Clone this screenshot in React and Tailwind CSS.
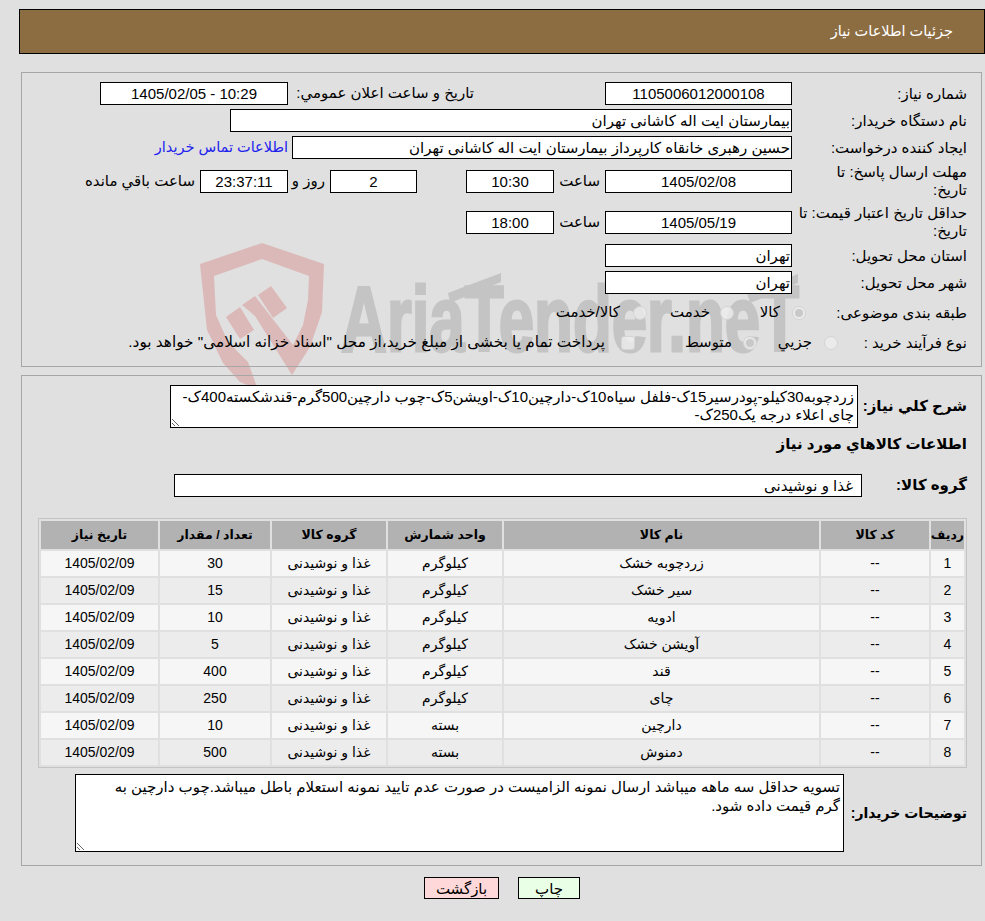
const items = [
  { id: 1, name: "زردچوبه خشک", unit: "کیلوگرم", qty: "30" },
  { id: 2, name: "سیر خشک", unit: "کیلوگرم", qty: "15" },
  { id: 3, name: "ادویه", unit: "کیلوگرم", qty: "10" },
  { id: 4, name: "آویشن خشک", unit: "کیلوگرم", qty: "5" },
  { id: 5, name: "قند", unit: "کیلوگرم", qty: "400" },
  { id: 6, name: "چای", unit: "کیلوگرم", qty: "250" },
  { id: 7, name: "دارچین", unit: "بسته", qty: "10" },
  { id: 8, name: "دمنوش", unit: "بسته", qty: "500" },
];

const font = { fontFamily: '"Liberation Sans", "DejaVu Sans", sans-serif' };

function Box({ className = "", children }) {
  return (
    <div className={`h-[23px] shrink-0 border border-black bg-white flex items-center justify-center text-[15px] leading-none whitespace-nowrap ${className}`}>
      {children}
    </div>
  );
}

function Label({ children }) {
  return <div className="w-[175px] shrink-0 text-[15px] leading-[18px]">{children}</div>;
}

function Radio({ checked, className = "" }) {
  return (
    <span className={`w-[14px] h-[14px] shrink-0 rounded-full border border-[#d4d4d4] bg-[#eeeeee]/80 flex items-center justify-center ${className}`}>
      {checked && <span className="w-[8px] h-[8px] rounded-full bg-[#c8c8c8]" />}
    </span>
  );
}

function Watermark() {
  return (
    <svg className="absolute left-0 top-0 pointer-events-none [direction:ltr]" width="985" height="420" viewBox="0 0 985 420">
      <path
        fill="#dcb9b9"
        d="M200 264 L262 243 L324 264 L322 312 L310 347 L292 375 L255 316 L242 305 L255 296 L272 318 L293 345 L303 325 L308 300 L309 276 L262 259 L214 276 L216 315 L228 342 L248 362 L258 390 L240 382 L223 363 L207 330 Z"
      />
      <path fill="#dcb9b9" d="M226 317 L240 307 L254 330 L240 339 Z" />
      <path fill="#dcb9b9" d="M258 295 L271 286 L287 308 L273 318 Z" />
      <text
        x="341"
        y="351"
        fill="#c4c4c4"
        stroke="#c4c4c4"
        strokeWidth="3"
        fontSize="93"
        fontWeight="700"
        textLength="458"
        lengthAdjust="spacingAndGlyphs"
        style={{ fontFamily: '"Liberation Sans", sans-serif' }}
      >
        AriaTender.neT
      </text>
      <path fill="#c4c4c4" d="M448 293 L501 273 L501 282 L450 303 Z" />
      <path fill="#c4c4c4" d="M747 293 L798 274 L798 283 L750 303 Z" />
    </svg>
  );
}

export default function App() {
  return (
    <div dir="rtl" style={font} className="relative w-[985px] h-[921px] overflow-hidden bg-[#e0e0e0] text-black">
      <Watermark />
      <div className="relative pt-[9px]">
        <div className="mr-0 ml-[19px] h-[45px] border border-black bg-[#8c6d42] flex items-center pr-[31px] pt-[1px] text-white text-[14.5px]">
          جزئیات اطلاعات نیاز
        </div>

        {/* first panel */}
        <div className="ml-[21px] mr-[3px] mt-[18px] h-[295px] border border-[#a6a6a6] pt-[9px] pr-[14px]">
          <div className="flex items-center h-[23px]">
            <Label>شماره نیاز:</Label>
            <Box className="w-[187px]">1105006012000108</Box>
            <div className="w-[186px] mr-[131px] text-[15px] whitespace-nowrap">تاریخ و ساعت اعلان عمومي:</div>
            <Box className="w-[188px]">10:29 - 1405/02/05</Box>
          </div>
          <div className="flex items-center h-[23px] mt-[4px]">
            <Label>نام دستگاه خریدار:</Label>
            <Box className="w-[562px] justify-start pr-[1px]">بیمارستان ایت اله کاشانی تهران</Box>
          </div>
          <div className="flex items-center h-[23px] mt-[4px]">
            <Label>ایجاد کننده درخواست:</Label>
            <Box className="w-[500px] justify-start pr-[1px]">حسین رهبری خانقاه کارپرداز بیمارستان ایت اله کاشانی تهران</Box>
            <a className="mr-[4px] text-[14.5px] text-[#2222ee]">اطلاعات تماس خریدار</a>
          </div>
          <div className="flex items-center h-[36px] mt-[4px]">
            <Label>مهلت ارسال پاسخ: تا<br />تاریخ:</Label>
            <Box className="w-[187px]">1405/02/08</Box>
            <div className="w-[51px] pr-[5px] text-[15px]">ساعت</div>
            <Box className="w-[88px]">10:30</Box>
            <div className="w-[49px]" />
            <Box className="w-[87px]">2</Box>
            <div className="w-[42px] pr-[5px] text-[15px]">روز و</div>
            <Box className="w-[88px] bg-[#ffffe8]">23:37:11</Box>
            <div className="pr-[5px] text-[15px] whitespace-nowrap">ساعت باقي مانده</div>
          </div>
          <div className="flex items-center h-[36px] mt-[5px]">
            <Label>حداقل تاریخ اعتبار قیمت: تا<br />تاریخ:</Label>
            <Box className="w-[187px]">1405/05/19</Box>
            <div className="w-[51px] pr-[5px] text-[15px]">ساعت</div>
            <Box className="w-[88px]">18:00</Box>
          </div>
          <div className="flex items-center h-[23px] mt-[4px]">
            <Label>استان محل تحویل:</Label>
            <Box className="w-[187px] justify-start pr-[1px]">تهران</Box>
          </div>
          <div className="flex items-center h-[23px] mt-[4px]">
            <Label>شهر محل تحویل:</Label>
            <Box className="w-[187px] justify-start pr-[1px]">تهران</Box>
          </div>
          <div className="flex items-center h-[23px] mt-[7px] text-[15px]">
            <Label>طبقه بندی موضوعی:</Label>
            <Radio checked className="mr-[-14px]" />
            <span className="w-[58px] pr-[12px]">کالا</span>
            <Radio />
            <span className="w-[73px] pr-[10px]">خدمت</span>
            <Radio />
            <span className="pr-[13px] whitespace-nowrap">کالا/خدمت</span>
          </div>
          <div className="flex items-center h-[23px] mt-[7px] text-[15px]">
            <Label>نوع فرآیند خرید :</Label>
            <Radio className="mr-[-46px]" />
            <span className="w-[67px] pr-[12px]">جزیي</span>
            <Radio checked />
            <span className="w-[108px] pr-[11px]">متوسط</span>
            <span className="w-[14px] h-[14px] shrink-0 rounded-[3px] border border-[#d4d4d4] bg-[#eeeeee]/80" />
            <span className="pr-[16px] whitespace-nowrap text-[15.3px]">پرداخت تمام یا بخشی از مبلغ خرید،از محل "اسناد خزانه اسلامی" خواهد بود.</span>
          </div>
        </div>

        {/* second panel */}
        <div className="ml-[21px] mr-[3px] mt-[8px] h-[491px] border border-[#a6a6a6] pt-[9px] pr-[14px]">
          <div className="flex items-center h-[43px]">
            <div className="w-[109px] shrink-0 text-[15px] font-bold">شرح كلي نياز:</div>
            <textarea
              readOnly
              dir="rtl"
              className="w-[688px] h-[43px] shrink-0 border border-black bg-white px-[3px] pt-[2px] text-[15px] leading-[18px] resize overflow-hidden outline-none"
              defaultValue="زردچوبه30کیلو-پودرسیر15ک-فلفل سیاه10ک-دارچین10ک-اویشن5ک-چوب دارچین500گرم-قندشکسته400ک-چای اعلاء درجه یک250ک-"
            />
          </div>
          <div className="mt-[6px] text-[15px] font-bold h-[20px] leading-[20px]">اطلاعات كالاهاي مورد نياز</div>
          <div className="flex items-center h-[23px] mt-[20px]">
            <div className="w-[105px] shrink-0 text-[15px] font-bold">گروه كالا:</div>
            <Box className="w-[688px] justify-start pr-[8px]">غذا و نوشیدنی</Box>
          </div>
          <table className="mt-[21px] w-[929px] table-fixed border-separate border-spacing-[2px] border border-[#c4c4c4] text-[14px] text-center">
            <colgroup>
              <col className="w-[33px]" />
              <col className="w-[108px]" />
              <col className="w-[315px]" />
              <col className="w-[114px]" />
              <col className="w-[114px]" />
              <col className="w-[110px]" />
              <col className="w-[117px]" />
            </colgroup>
            <thead>
              <tr className="h-[28px] bg-[#b2b2b2] font-bold text-[12.5px]">
                <th>ردیف</th>
                <th>کد کالا</th>
                <th>نام کالا</th>
                <th>واحد شمارش</th>
                <th>گروه کالا</th>
                <th>تعداد / مقدار</th>
                <th>تاریخ نیاز</th>
              </tr>
            </thead>
            <tbody>
              {items.map((it) => (
                <tr key={it.id} className={`h-[25px] ${it.id % 2 ? "bg-[#f6f6f6]" : "bg-[#ececec]"}`}>
                  <td>{it.id}</td>
                  <td>--</td>
                  <td>{it.name}</td>
                  <td>{it.unit}</td>
                  <td>غذا و نوشیدنی</td>
                  <td>{it.qty}</td>
                  <td>1405/02/09</td>
                </tr>
              ))}
            </tbody>
          </table>
          <div className="flex items-center h-[78px] mt-[6px]">
            <div className="w-[123px] shrink-0 text-[14px] font-bold whitespace-nowrap">توضیحات خریدار:</div>
            <textarea
              readOnly
              dir="rtl"
              className="w-[769px] h-[78px] shrink-0 border border-black bg-white px-[3px] pt-[2px] text-[15px] leading-[19px] resize overflow-hidden outline-none"
              defaultValue={"تسویه حداقل سه ماهه میباشد ارسال نمونه الزامیست در صورت عدم تایید نمونه استعلام باطل میباشد.چوب دارچین به\nگرم قیمت داده شود."}
            />
          </div>
        </div>

        <div className="flex justify-center gap-[19px] mt-[11px] pl-[19px]">
          <button className="w-[62px] h-[22px] border border-black bg-[#e9ffe6] text-[15px] leading-none">چاپ</button>
          <button className="w-[75px] h-[22px] border border-black bg-[#ffd9d9] text-[15px] leading-none">بازگشت</button>
        </div>
      </div>
    </div>
  );
}
